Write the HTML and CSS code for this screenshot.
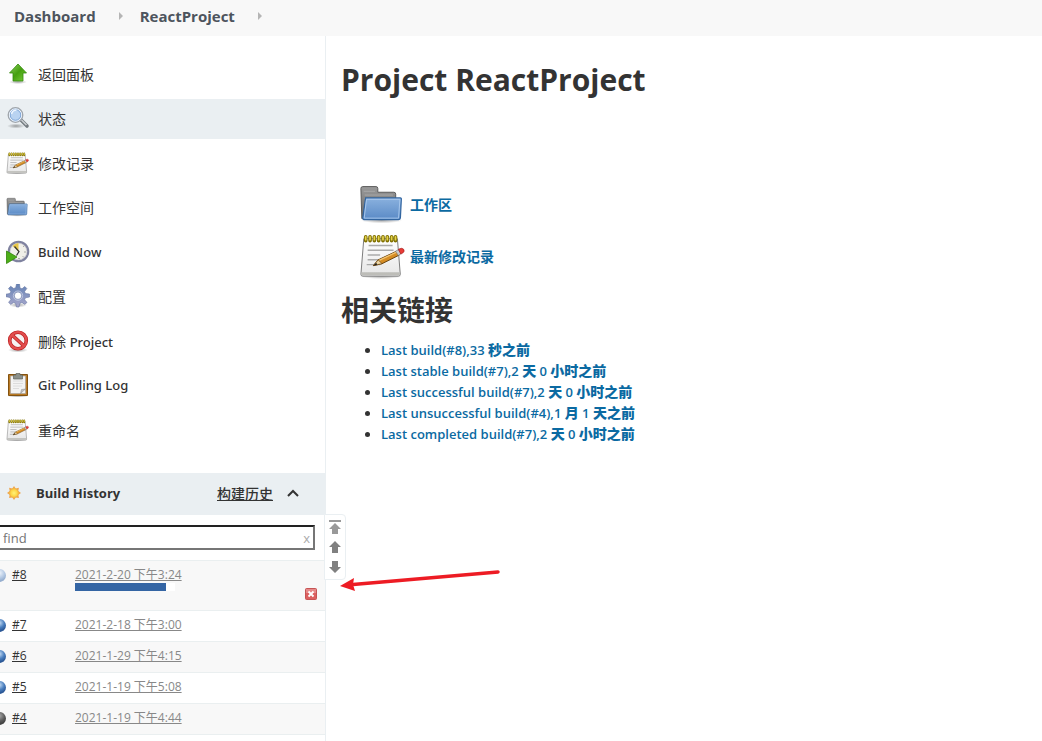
FILE: index.html
```html
<!DOCTYPE html>
<html lang="zh-CN">
<head>
<meta charset="utf-8">
<title>ReactProject</title>
<link rel="stylesheet" href="styles.css">
</head>
<body>
<svg class="defs" aria-hidden="true">
  <defs>
    <linearGradient id="green" x1="0" y1="0" x2="1" y2="1"><stop offset="0" stop-color="#8fd060"/><stop offset=".5" stop-color="#45a010"/><stop offset="1" stop-color="#7bcf3c"/></linearGradient>
    <linearGradient id="blue" x1="0" y1="0" x2="0" y2="1"><stop offset="0" stop-color="#8ab1de"/><stop offset="1" stop-color="#5a8ac6"/></linearGradient>
    <linearGradient id="folder" x1="0" y1="0" x2="0" y2="1"><stop offset="0" stop-color="#9a9a9a"/><stop offset="1" stop-color="#666"/></linearGradient>
    <linearGradient id="gear" x1="0" y1="0" x2="0" y2="1"><stop offset="0" stop-color="#6583b5"/><stop offset="1" stop-color="#a9a8cc"/></linearGradient>
    <linearGradient id="paper" x1="0" y1="0" x2="0" y2="1"><stop offset="0" stop-color="#fff"/><stop offset="1" stop-color="#e6e6e6"/></linearGradient>
    <radialGradient id="ballBlue" cx=".5" cy=".3" r=".65"><stop offset="0" stop-color="#c5dcf3"/><stop offset=".55" stop-color="#4c80bf"/><stop offset="1" stop-color="#24508f"/></radialGradient>
    <radialGradient id="ballPale" cx=".5" cy=".3" r=".65"><stop offset="0" stop-color="#eef4fb"/><stop offset=".6" stop-color="#b4c9e4"/><stop offset="1" stop-color="#8fa9cb"/></radialGradient>
    <radialGradient id="ballGray" cx=".5" cy=".3" r=".65"><stop offset="0" stop-color="#a8a8a8"/><stop offset=".6" stop-color="#5c5c5c"/><stop offset="1" stop-color="#3c3c3c"/></radialGradient>
    <radialGradient id="shade"><stop offset="0" stop-color="#000" stop-opacity=".35"/><stop offset="1" stop-color="#000" stop-opacity="0"/></radialGradient>
    <radialGradient id="sun"><stop offset="0" stop-color="#fff27a"/><stop offset="1" stop-color="#fccb35"/></radialGradient>
  </defs>
  <symbol id="i-notepad" viewBox="0 -1 50 50">
    <ellipse cx="23" cy="45" rx="22" ry="3" fill="url(#shade)"/>
    <path d="M5 6h35l3 37q0 2-2 2H4q-2 0-2-2z" fill="url(#paper)" stroke="#777"/>
    <path d="M2.500 41h40v3h-40z" fill="#bdbdb8"/>
    <path d="M10 13h25M9 18h27M9 23h13M9 28h16M8 33h14" stroke="#aaa" stroke-width="1.500"/>
    <path d="M7 4v4M11.500 4v4M16 4v4M20.500 4v4M25 4v4M29.500 4v4M34 4v4M38 4v4" stroke="#817000" stroke-width="3.800" stroke-linecap="round"/>
    <path d="M7 4v3M11.500 4v3M16 4v3M20.500 4v3M25 4v3M29.500 4v3M34 4v3M38 4v3" stroke="#e4d34b" stroke-width="1.800" stroke-linecap="round"/>
    <path d="M15 34l5-6 19-9 3 4-18 9z" fill="#d68d24" stroke="#65400c"/>
    <path d="M21 28.500l18-8.500" stroke="#f4c673" stroke-width="1.300"/>
    <path d="M15 34l5-6 4 4z" fill="#edd6a5" stroke="#65400c" stroke-width=".7"/>
    <path d="M15 34l3-3 1 2z" fill="#222"/>
    <path d="M38 19l3-1.500 3 4-3 2z" fill="#ccc" stroke="#777" stroke-width=".6"/>
    <path d="M41 17q4-2 5.500 0t-1 4l-2 1z" fill="#e83b35" stroke="#a41b1b" stroke-width=".7"/>
  </symbol>
  <symbol id="i-folder" viewBox="-1 -2 51 51">
    <ellipse cx="23" cy="41" rx="22" ry="3" fill="url(#shade)"/>
    <path d="M2 39L1 7q0-2 2-2h14q2 0 2 2v4h17q2 0 2 2v26z" fill="url(#folder)" stroke="#555"/>
    <path d="M4 10h12M5 14h30M5 18h30" stroke="#aaa"/>
    <path d="M6 17h37q1 0 1 1l-1 20q0 2-2 2H4q-1 0-1-2z" fill="url(#blue)" stroke="#3265a0" stroke-width="1.300"/>
    <path d="M7 18.500h35.500l-1.500 20H4.500z" fill="none" stroke="#b0cdef" stroke-width=".9"/>
  </symbol>
  <symbol id="i-up" viewBox="0 0 24 24"><ellipse cx="12" cy="20" rx="9" ry="2" fill="url(#shade)"/><path d="M12 2l8.500 9H17v8H7v-8H3.500z" fill="url(#green)" stroke="#348a0d" stroke-width=".8"/></symbol>
  <symbol id="i-search" viewBox="0 0 24 24"><ellipse cx="10" cy="20" rx="9" ry="2.500" fill="url(#shade)"/><path d="M15 14l6 6" stroke="#747b80" stroke-width="3.600" stroke-linecap="round"/><path d="M15.500 14l5 5" stroke="#c9cdd0" stroke-width="1.600"/><circle cx="9.500" cy="9" r="7.300" fill="#b4cff0" stroke="#a1a6ab" stroke-width="1.300"/><circle cx="9.500" cy="9" r="6" fill="#b9d3f1" stroke="#fff"/><circle cx="9.500" cy="9" r="5.300" fill="none" stroke="#6f9bd0" stroke-width=".8"/><path d="M5.500 8q1-4 5-4" fill="none" stroke="#eef6ff" stroke-width="1.500"/></symbol>
  <symbol id="i-clock" viewBox="0 0 24 24"><circle cx="12.500" cy="11.500" r="9.700" fill="#f1f0e9" stroke="#7f829f" stroke-width="2.200"/><circle cx="12.500" cy="11.500" r="8.300" fill="none" stroke="#c4c5ce" stroke-width=".6"/><path d="M12.500 11.500L6.500 6q2-2.500 6-3z" fill="#e8c647"/><path d="M8.500 6.500l4.500 5-2.500 4" fill="none" stroke="#333" stroke-width="1.200"/><path d="M18.500 12h1M13 18v1M17.500 6.500l.7-.7M17 16.500l.7.7" stroke="#666"/><path d="M.5 11l10.500 6-10.500 6.500z" fill="#4daf18" stroke="#308407" stroke-width=".8"/></symbol>
  <symbol id="i-gear" viewBox="0 0 24 24"><ellipse cx="12" cy="21" rx="9" ry="2.500" fill="url(#shade)"/><path fill-rule="evenodd" d="M10.500 0h3l.5 4 2 .8L18.800 2.500l2 2-2.200 3 .8 2 4.100.5v3l-4.100.8-.8 2 2.400 2.600-2.200 2-2.900-2-2 .9-.9 3.700h-2.500l-.9-3.700-2-.9-2.800 2-2.200-2 2.300-2.900-.9-2-4-.8v-2.500l4-.8.8-2-2.300-2.900 2.200-2.200 3 2.200 2-.8zM12 8a3.700 3.700 0 100 7.400A3.700 3.700 0 0012 8z" fill="url(#gear)" stroke="#6776a2" stroke-width=".6"/><circle cx="12" cy="11.700" r="4.700" fill="none" stroke="#bdc5de" stroke-width="1"/></symbol>
  <symbol id="i-ban" viewBox="0 0 24 24"><ellipse cx="12" cy="21" rx="10" ry="2.500" fill="url(#shade)"/><circle cx="12" cy="11.500" r="8.300" fill="#f6f2f2" stroke="#bc2020" stroke-width="3.600"/><path d="M6 6l12 11" stroke="#bc2020" stroke-width="3.600"/><circle cx="12" cy="11.500" r="8.300" fill="none" stroke="#e24d4d" stroke-width="2.200"/><path d="M6 6l12 11" stroke="#e24d4d" stroke-width="2.200"/></symbol>
  <symbol id="i-clip" viewBox="0 0 24 24"><ellipse cx="12" cy="23" rx="11" ry="1.500" fill="url(#shade)"/><path d="M2.500 1.500h19V22.500h-19z" fill="#b97a25" stroke="#83520f"/><path d="M4.500 3h15v17.500h-15z" fill="#f3f3f3" stroke="#a5a5a5" stroke-width=".6"/><path d="M7 8h10M7 10.500h10M7 13h9M7 15.500h6" stroke="#dcdcdc"/><path d="M14.500 20.500l1-4 4-.5z" fill="#c1c1c1" stroke="#888" stroke-width=".5"/><path d="M7.500 2H10V.500h4V2h2.500v4h-9z" fill="#8c918b" stroke="#606560" stroke-width=".7"/></symbol>
  <symbol id="i-ball-blue" viewBox="8 0 8 16"><circle cx="7.500" cy="8.500" r="6.500" fill="url(#ballBlue)"/></symbol>
  <symbol id="i-ball-pale" viewBox="8 0 8 16"><circle cx="7.500" cy="8.500" r="6.500" fill="url(#ballPale)"/></symbol>
  <symbol id="i-ball-gray" viewBox="8 0 8 16"><circle cx="7.500" cy="8.500" r="6.500" fill="url(#ballGray)"/></symbol>
</svg>

<nav class="crumbs" aria-label="Breadcrumb">
  <a href="#">Dashboard</a><svg class="crumb-sep" viewBox="0 0 5 8"><path d="M0 0l4 4-4 4z" fill="#b5b5b5"/></svg>
  <a href="#">ReactProject</a><svg class="crumb-sep" viewBox="0 0 5 8"><path d="M0 0l4 4-4 4z" fill="#b5b5b5"/></svg>
</nav>

<div class="page">
  <aside class="side">
    <ul class="tasks">
      <li><a href="#"><svg class="icon"><use href="#i-up"/></svg><span>返回面板</span></a></li>
      <li class="active"><a href="#"><svg class="icon"><use href="#i-search"/></svg><span>状态</span></a></li>
      <li><a href="#"><svg class="icon"><use href="#i-notepad"/></svg><span>修改记录</span></a></li>
      <li><a href="#"><svg class="icon"><use href="#i-folder"/></svg><span>工作空间</span></a></li>
      <li><a href="#"><svg class="icon"><use href="#i-clock"/></svg><span class="latin">Build Now</span></a></li>
      <li><a href="#"><svg class="icon"><use href="#i-gear"/></svg><span>配置</span></a></li>
      <li><a href="#"><svg class="icon"><use href="#i-ban"/></svg><span>删除 <span class="latin">Project</span></span></a></li>
      <li><a href="#"><svg class="icon"><use href="#i-clip"/></svg><span class="latin">Git Polling Log</span></a></li>
      <li><a href="#"><svg class="icon"><use href="#i-notepad"/></svg><span>重命名</span></a></li>
    </ul>

    <section class="history">
      <header class="history-head">
        <svg class="sun" viewBox="0 0 16 16"><path d="M8 1l1.700 2.500 3.200-.7-.6 3.200L15 8l-2.600 1.800.5 3.200-3.200-.6L8 15l-1.700-2.600-3.200.6.500-3.200L1 8l2.700-2-.6-3.200 3.200.7z" fill="#efa64c"/><circle cx="8" cy="8" r="4.400" fill="url(#sun)" stroke="#f2b64a"/></svg>
        <h2>Build History</h2>
        <a href="#">构建历史</a>
        <button class="toggle" aria-label="Collapse"><svg viewBox="0 0 12 8"><path d="M1 7l5-5 5 5" fill="none" stroke="#333" stroke-width="2"/></svg></button>
      </header>
      <div class="search">
        <input type="text" placeholder="find" aria-label="find">
        <button class="clear">x</button>
      </div>
      <table class="builds">
        <tr class="running">
          <td class="num"><svg class="ball"><use href="#i-ball-pale"/></svg><a href="#">#8</a></td>
          <td><a href="#">2021-2-20 下午3:24</a><div class="bar"><div class="bar-fill" style="width: 91%"></div></div></td>
          <td class="stop-cell"><button class="stop" aria-label="Stop"><svg viewBox="0 0 12 12"><rect x=".5" y=".5" width="11" height="11" rx="1" fill="#dc6060" stroke="#c65454"/><path d="M1 1h10v4H1z" fill="#eba0a0" opacity=".65"/><path d="M3.500 3.500l5 5m0-5l-5 5" stroke="#fff" stroke-width="1.800"/></svg></button></td>
        </tr>
        <tr><td class="num"><svg class="ball"><use href="#i-ball-blue"/></svg><a href="#">#7</a></td><td colspan="2"><a href="#">2021-2-18 下午3:00</a></td></tr>
        <tr><td class="num"><svg class="ball"><use href="#i-ball-blue"/></svg><a href="#">#6</a></td><td colspan="2"><a href="#">2021-1-29 下午4:15</a></td></tr>
        <tr><td class="num"><svg class="ball"><use href="#i-ball-blue"/></svg><a href="#">#5</a></td><td colspan="2"><a href="#">2021-1-19 下午5:08</a></td></tr>
        <tr><td class="num"><svg class="ball"><use href="#i-ball-gray"/></svg><a href="#">#4</a></td><td colspan="2"><a href="#">2021-1-19 下午4:44</a></td></tr>
      </table>
      <div class="pager">
        <button aria-label="Newest"><svg viewBox="0 0 12 14"><path d="M0 0h12v2H0zM6 3l6 6H9v5H3V9H0z" fill="#999"/></svg></button>
        <button aria-label="Newer"><svg viewBox="0 0 12 14"><path d="M6 1l6 6H9v6H3V7H0z" fill="#808080"/></svg></button>
        <button aria-label="Older"><svg viewBox="0 0 12 14"><path d="M6 13l6-6H9V1H3v6H0z" fill="#808080"/></svg></button>
      </div>
      <svg class="pointer" viewBox="0 0 160 24"><path d="M12 16.500L157 4" stroke="#ed1c24" stroke-width="3.500" stroke-linecap="round"/><path d="M-1 18l14-8-1 6.500 2 6.500z" fill="#ed1c24"/></svg>
    </section>
  </aside>

  <main class="main">
    <h1>Project ReactProject</h1>
    <div class="shortcuts">
      <a href="#"><svg class="icon-big"><use href="#i-folder"/></svg>工作区</a>
      <a href="#"><svg class="icon-big"><use href="#i-notepad"/></svg>最新修改记录</a>
    </div>
    <h2>相关链接</h2>
    <ul class="links">
      <li><a href="#">Last build(#8),33 <b>秒之前</b></a></li>
      <li><a href="#">Last stable build(#7),2 <b>天</b> 0 <b>小时之前</b></a></li>
      <li><a href="#">Last successful build(#7),2 <b>天</b> 0 <b>小时之前</b></a></li>
      <li><a href="#">Last unsuccessful build(#4),1 <b>月</b> 1 <b>天之前</b></a></li>
      <li><a href="#">Last completed build(#7),2 <b>天</b> 0 <b>小时之前</b></a></li>
    </ul>
  </main>
</div>
</body>
</html>
```

FILE: styles.css
```css
* { box-sizing: border-box; }
body {
  margin: 0;
  min-height: 100vh;
  display: flex;
  flex-direction: column;
  background: #fff;
  color: #333;
  font-family: "Open Sans", "Noto Sans CJK SC", sans-serif;
  font-size: 14px;
}
a { color: inherit; }
button { padding: 0; border: 0; background: none; font: inherit; cursor: pointer; }
svg { display: block; flex: none; }
.defs { position: absolute; width: 0; height: 0; }

.crumbs {
  display: flex;
  align-items: center;
  height: 36px;
  padding: 0 14px 4px;
  background: #f8f8f8;
  color: #4d545d;
  font-size: 15px;
  font-weight: 700;
}
.crumbs a { text-decoration: none; }
.crumb-sep { width: 5px; height: 8px; margin: 0 16px 0 23px; }

.page { flex: 1; display: grid; grid-template-columns: 326px 1fr; }
.side { border-right: 1px solid #eaeff2; }
.tasks { list-style: none; margin: 0; padding: 19px 0 22px; }
.tasks li { margin-bottom: 4px; }
.tasks li:nth-child(even) { margin-bottom: 5px; }
.tasks li:last-child { margin-bottom: 0; }
.tasks a {
  display: flex;
  align-items: center;
  gap: 8px;
  height: 40px;
  padding: 0 0 2px 6px;
  color: #333;
  text-decoration: none;
}
.tasks .active { background: #eaeff2; }
.latin { font-family: "Noto Sans", "Open Sans", sans-serif; font-size: 13px; font-weight: 500; }
.icon { width: 24px; height: 24px; }

.history { position: relative; }
.history-head {
  display: flex;
  align-items: center;
  height: 42px;
  padding: 0 26px 2px 6px;
  background: #eaeff2;
}
.history-head h2 { flex: 1; margin: 0 0 0 14px; font-size: 13px; }
.history-head a { font-weight: 500; }
.sun { width: 16px; height: 16px; }
.toggle { margin-left: 14px; }
.toggle svg { width: 12px; height: 8px; }

.search { display: flex; align-items: center; position: relative; padding: 10px 10px 10px 0; }
.search input {
  width: 100%;
  height: 25px;
  padding: 0 3px;
  border: 2px solid #767676;
  border-top-color: #222;
  border-left: 0;
  font: inherit;
  font-size: 13px;
}
.search input::placeholder { color: #757575; }
.clear { position: absolute; right: 15px; color: #aaa; font-size: 13px; }

.builds { width: 100%; border-collapse: collapse; font-size: 12px; line-height: 16px; }
.builds td { height: 31px; padding: 6px 0; border-top: 1px solid #eaeff0; vertical-align: top; }
.builds tr:nth-child(odd) { background: #f8f8f8; }
.builds tr:last-child td { border-bottom: 1px solid #eaeff0; }
.builds .running td { height: 50px; }
.builds td a { color: #888; }
.builds .num { width: 75px; }
.builds .num a { color: #333; }
.ball { float: left; width: 8px; height: 16px; margin-right: 4px; }
.bar { width: 100px; height: 8px; background: #fff; }
.bar-fill { height: 100%; background: #3465a4; }
.builds .stop-cell { width: 20px; padding-bottom: 10px; vertical-align: bottom; }
.stop { display: block; }
.stop svg { width: 12px; height: 12px; }

.pager {
  position: absolute;
  top: 41px;
  left: 324px;
  display: flex;
  flex-direction: column;
  justify-content: space-between;
  align-items: center;
  width: 22px;
  height: 66px;
  padding: 5px 0;
  border: 1px solid #eaeff2;
  border-radius: 0 4px 4px 0;
  background: #fff;
}
.pager svg { width: 12px; height: 14px; }
.pointer { position: absolute; top: 95px; left: 341px; width: 160px; height: 24px; overflow: visible; }

.main { padding: 20px 15px; }
h1 { margin: 0; font-size: 30px; line-height: 48px; }
.shortcuts { display: flex; flex-direction: column; align-items: flex-start; gap: 4px; padding: 76px 0 0 18px; }
.shortcuts a { display: flex; align-items: center; gap: 3px; color: #0b6aa2; font-weight: 700; text-decoration: none; }
.icon-big { width: 48px; height: 48px; }
.main h2 { margin: 8px 0; font-size: 28px; line-height: 44px; }
.links { margin: 0; padding-left: 40px; font-size: 13px; line-height: 21px; }
.links a { color: #0b6aa2; font-weight: 600; text-decoration: none; }
.links b { font-size: 14px; line-height: 20px; }
```
